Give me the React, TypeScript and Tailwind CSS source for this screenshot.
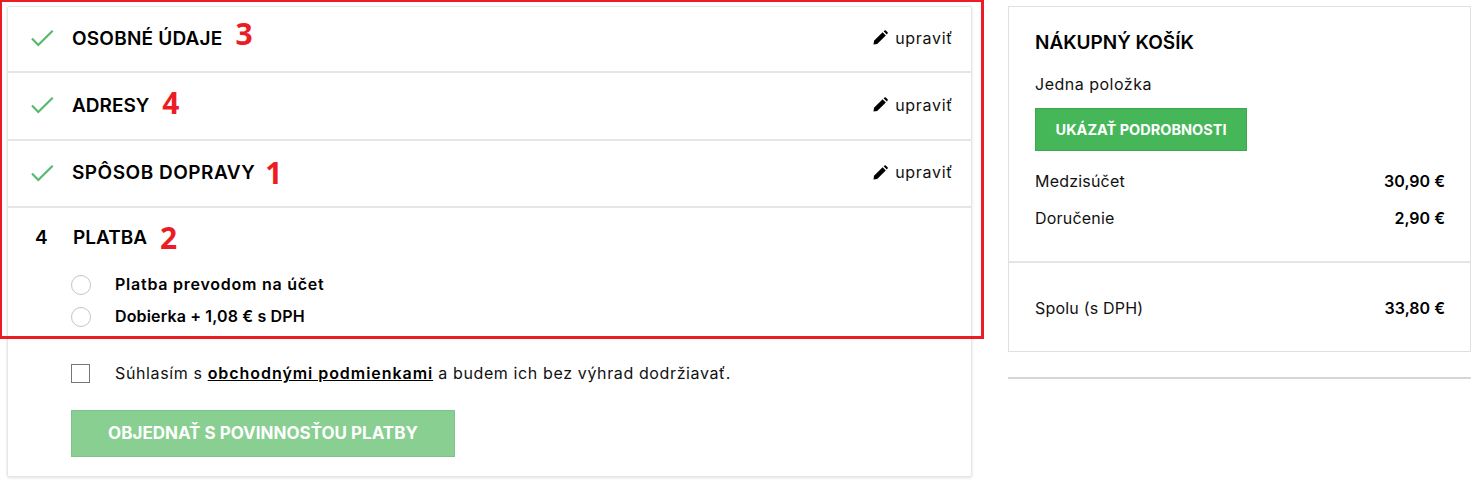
import React from 'react';

const font = { sans: 'font-["Inter","Liberation_Sans",sans-serif]' };

const Check = () => (
  <svg width="24" height="18" viewBox="0 0 24 18" fill="none" className="shrink-0">
    <path d="M2 8.5 L8.3 15 L22.7 0.8" stroke="#58b96c" strokeWidth="2.2" />
  </svg>
);

const Pencil = () => (
  <svg width="15" height="15" viewBox="0 0 15 15" className="shrink-0">
    <path d="M0.5 14.5 L1 10.8 L9.6 2.2 L12.8 5.4 L4.2 14 Z M10.6 1.2 L11.6 0.4 Q12.2 0 12.8 0.4 L14.6 2.2 Q15 2.8 14.6 3.4 L13.8 4.4 Z" fill="#000" />
  </svg>
);

// one finished step of the checkout
const DoneStep = ({ title, titleClass, mark, markClass, height }: { title: string; titleClass: string; mark: string; markClass: string; height: string }) => (
  <div className={`flex items-center border-b-2 border-[#e5e5e5] pl-[22px] pr-[18px] ${height}`}>
    <div className="w-[42px]">
      <Check />
    </div>
    <h2 className={`text-[19px] font-semibold text-black ${titleClass}`}>{title}</h2>
    <span className={`font-["Open_Sans",sans-serif] text-[30px] font-bold leading-none text-[#ed1c24] ${markClass}`}>{mark}</span>
    <a className="ml-auto -mt-[3px] flex items-center gap-[7px] text-[16px] tracking-[0.7px] text-[#111]">
      <Pencil />
      upraviť
    </a>
  </div>
);

const Radio = ({ label, className }: { label: string; className: string }) => (
  <div className="flex h-[32px] items-center">
    <span className="h-[20px] w-[20px] rounded-full border border-[#c4c4c4] bg-white" />
    <span className={`-mt-[2px] ml-[24px] text-[16px] font-semibold text-black ${className}`}>{label}</span>
  </div>
);

const PriceRow = ({ label, price }: { label: string; price: string }) => (
  <div className="flex items-center justify-between text-[16px] text-[#111]">
    <span className="tracking-[0.2px]">{label}</span>
    <span className="font-semibold text-black">{price}</span>
  </div>
);

export default function App() {
  return (
    <div className={`relative flex h-[486px] w-[1479px] items-start gap-[36px] overflow-hidden bg-white pl-[7px] pt-[6px] ${font.sans}`}>
      {/* left checkout card */}
      <div className="h-[471px] w-[965px] rounded-[2px] border border-[#e6e6e6] shadow-[0_1px_3px_rgba(0,0,0,0.12)]">
        <DoneStep title="OSOBNÉ ÚDAJE" titleClass="tracking-[0.2px]" mark="3" markClass="ml-[13px] -mt-[11px]" height="h-[66px]" />
        <DoneStep title="ADRESY" titleClass="" mark="4" markClass="ml-[13px] -mt-[6px]" height="h-[68px]" />
        <DoneStep title="SPÔSOB DOPRAVY" titleClass="tracking-[0.5px]" mark="1" markClass="ml-[10px] -mt-[2px]" height="h-[67px]" />

        <div className="h-[131px] pl-[27px]">
          <div className="flex h-[60px] items-center pt-[1px]">
            <span className="w-[38px] text-[19px] font-semibold text-black">4</span>
            <h2 className="text-[19px] font-semibold text-black">PLATBA</h2>
            <span className='-mt-[2px] ml-[13px] font-["Open_Sans",sans-serif] text-[30px] font-bold leading-none text-[#ed1c24]'>2</span>
          </div>
          <div className="ml-[36px] mt-[1px]">
            <Radio label="Platba prevodom na účet" className="tracking-[0.75px]" />
            <Radio label="Dobierka + 1,08 € s DPH" className="tracking-[0.15px]" />
          </div>
        </div>

        <div className="pl-[63px] pt-[22px]">
          <label className="flex items-center">
            <span className="h-[19px] w-[19px] border border-[#767676] bg-white" />
            <span className="ml-[25px] text-[16px] tracking-[0.62px] text-[#111]">
              Súhlasím s <a className="font-semibold tracking-[0.95px] text-black underline">obchodnými podmienkami</a> a budem ich bez výhrad dodržiavať.
            </span>
          </label>
          <button className="mt-[25px] h-[47px] w-[384px] border border-[#7cc48b] bg-[#88cf91] text-[17px] font-bold text-white">
            OBJEDNAŤ S POVINNOSŤOU PLATBY
          </button>
        </div>
      </div>

      {/* cart summary */}
      <div className="w-[463px]">
        <div className="h-[346px] border border-[#e0e0e0]">
          <div className="h-[256px] border-b-2 border-[#e5e5e5] pl-[26px] pr-[25px] pt-[24px]">
            <h2 className="text-[19px] font-semibold leading-[24px] text-black">NÁKUPNÝ KOŠÍK</h2>
            <p className="mt-[19px] text-[16px] leading-[20px] tracking-[0.5px] text-[#111]">Jedna položka</p>
            <button className="mt-[14px] block h-[43px] w-[212px] border border-[#3ea651] bg-[#46b758] text-[14.5px] font-bold text-white">
              UKÁZAŤ PODROBNOSTI
            </button>
            <div className="mt-[20px] flex flex-col gap-[17px] leading-[20px]">
              <PriceRow label="Medzisúčet" price="30,90 €" />
              <PriceRow label="Doručenie" price="2,90 €" />
            </div>
          </div>
          <div className="flex h-[88px] flex-col justify-center pl-[26px] pr-[25px] pt-[2px]">
            <PriceRow label="Spolu (s DPH)" price="33,80 €" />
          </div>
        </div>
        <div className="mt-[25px] h-[2px] bg-[#d6d6d6]" />
      </div>

      {/* red annotation frame from the screenshot */}
      <div className="pointer-events-none absolute -left-px -top-px h-[340px] w-[985px] border-[3px] border-[#ed1c24]" />
    </div>
  );
}
